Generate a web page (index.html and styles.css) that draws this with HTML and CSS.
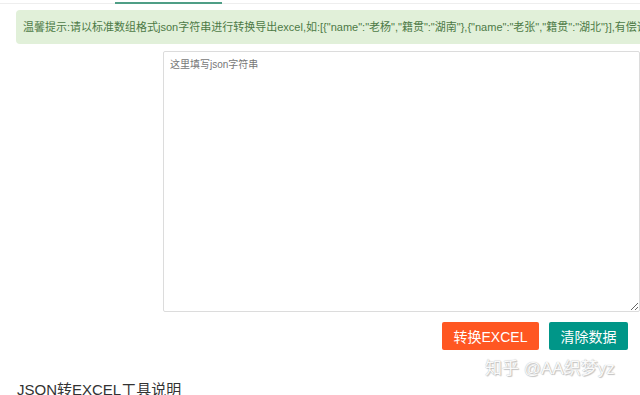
FILE: index.html
```html
<!DOCTYPE html>
<html lang="zh-CN">
<head>
<meta charset="utf-8">
<title>JSON转EXCEL</title>
<link rel="stylesheet" href="styles.css">
</head>
<body>
<div class="page">
  <div class="tabbar"><span class="tab-active"></span></div>
  <div class="alert">温馨提示:请以标准数组格式json字符串进行转换导出excel,如:[{"name":"老杨","籍贯":"湖南"},{"name":"老张","籍贯":"湖北"}],有偿请联系站长定制其他格式的转换</div>
  <div class="form-row">
    <textarea class="json-input" placeholder="这里填写json字符串"></textarea>
  </div>
  <div class="btn-row">
    <button class="btn btn-orange">转换EXCEL</button>
    <button class="btn btn-teal">清除数据</button>
  </div>
  <h2 class="section-title">JSON转EXCEL工具说明</h2>
  <div class="watermark">知乎 @AA织梦yz</div>
</div>
</body>
</html>
```

FILE: styles.css
```css
html, body {
  margin: 0;
  padding: 0;
  background: #fff;
  overflow: hidden;
}
body {
  font-family: "Liberation Sans", "Noto Sans CJK SC", sans-serif;
  color: #333;
}
.page {
  position: relative;
  width: 640px;
  height: 395px;
  overflow: hidden;
  display: flex;
  flex-direction: column;
}
.tabbar {
  height: 3px;
  border-bottom: 1px solid #eeeeee;
  position: relative;
  flex: none;
}
.tab-active {
  position: absolute;
  left: 115px;
  width: 107px;
  bottom: -1px;
  height: 2px;
  background: #4f9e86;
}
.alert {
  flex: none;
  margin: 6px 0 0 16px;
  height: 34px;
  line-height: 34px;
  padding-left: 7px;
  width: 700px;
  background: #e1f0d9;
  color: #4d7a46;
  font-size: 11px;
  border-radius: 4px;
  white-space: nowrap;
  overflow: hidden;
}
.form-row {
  flex: none;
  display: flex;
  padding-left: 163px;
  margin-top: 7px;
}
.json-input {
  box-sizing: border-box;
  width: 479px;
  height: 261px;
  border: 1px solid #dcdcdc;
  border-radius: 2px;
  padding: 4px 6px;
  font-family: "Liberation Sans", "Noto Sans CJK SC", sans-serif;
  font-size: 10px;
  resize: vertical;
  margin: 0;
  outline: none;
}
.json-input::placeholder {
  color: #777;
}
.btn-row {
  flex: none;
  display: flex;
  justify-content: flex-end;
  gap: 10px;
  padding-right: 12px;
  margin-top: 10px;
}
.btn {
  height: 28px;
  border: none;
  border-radius: 2px;
  color: #fff;
  font-family: "Liberation Sans", "Noto Sans CJK SC", sans-serif;
  font-size: 14px;
  padding: 0;
  margin: 0;
  white-space: nowrap;
  cursor: pointer;
}
.btn-orange {
  background: #ff5722;
  width: 97px;
}
.btn-teal {
  background: #009688;
  width: 79px;
}
.section-title {
  flex: none;
  margin: 31px 0 0 17px;
  font-size: 15px;
  font-weight: normal;
  color: #333;
  line-height: 18px;
  white-space: nowrap;
}
.watermark {
  position: absolute;
  left: 485px;
  top: 354px;
  font-size: 17px;
  color: #fafafa;
  text-shadow: 0 0 1px #aaa, 1px 1px 1px #c4c4c4;
  white-space: nowrap;
}
```
